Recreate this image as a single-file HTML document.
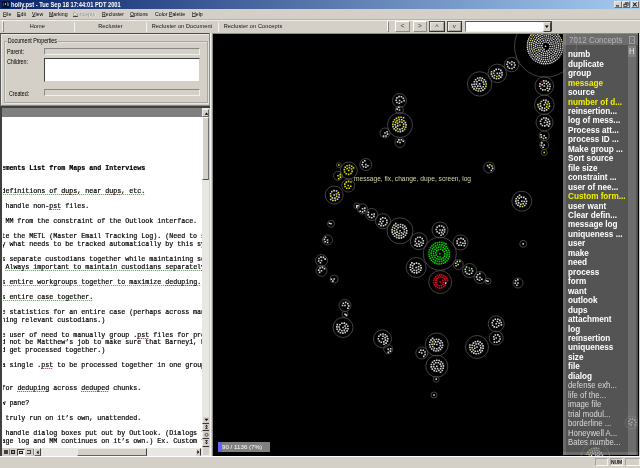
<!DOCTYPE html>
<html><head><meta charset="utf-8"><title>holly.pst</title>
<style>
html,body{margin:0;padding:0}
body{width:640px;height:468px;overflow:hidden;position:relative;background:#d4d0c8;font-family:"Liberation Sans",sans-serif;font-size:6px;color:#000;-webkit-text-size-adjust:none;will-change:transform}
div,span{position:absolute;box-sizing:border-box;white-space:pre}
#title{left:0;top:0;width:640px;height:9px;background:linear-gradient(to right,#0a246a 0%,#a6caf0 100%)}
#title .t{left:11px;top:0;height:9px;line-height:9px;color:#fff;font-weight:bold;font-size:7.2px;transform-origin:0 50%;transform:scaleX(0.795)}
.tb{top:1px;width:7.6px;height:6.6px;background:#d8d5ce;border:1px solid;border-color:#ebe9e4 #6c6a66 #6c6a66 #ebe9e4}
#menu{left:0;top:9px;width:640px;height:10px}
#menu span{top:0;height:10px;line-height:10px;font-size:6.2px;transform-origin:0 50%;transform:scaleX(0.842)}
#menu u{text-decoration:underline;text-decoration-thickness:0.45px;text-underline-offset:0.4px;text-decoration-color:#444}
#tools{left:0;top:20px;width:640px;height:13px}
#tools span.l{top:0;height:13px;line-height:13px;font-size:5.6px;letter-spacing:0.1px;text-align:center;color:#111}
.sep{top:2px;width:1.4px;height:10px;background:linear-gradient(90deg,#96948c 0 50%,#f4f2ee 50% 100%)}
.btn{background:#d4d0c8;border:1px solid;border-color:#efede9 #66645f #66645f #efede9;font-size:6px;text-align:center;line-height:9px;font-weight:bold;color:#222}
.sunk{border:1px solid;border-color:#8a8884 #f2f0ec #f2f0ec #8a8884;background:#d4d0c8}
.nb{font-weight:normal;font-size:7px;color:#3a3a3a;line-height:8.5px}
.vb{left:201.8px;width:7.6px;background:#d4d0c8;border-left:1px solid #efede9;border-bottom:1px solid #333}
#clip{left:1.1px;top:0;width:199px;height:331px;overflow:hidden}
#doc{left:1.9px;top:117px;width:200.1px;height:331px;background:#fff;overflow:hidden}
.ln{left:-1.6px;height:8px;line-height:8px;font-family:"Liberation Mono",monospace;font-size:6.667px;color:#000;letter-spacing:0px;-webkit-text-stroke:0.2px #000}
.ln b{font-weight:bold}
u{text-decoration:none}
u.g{background:repeating-linear-gradient(90deg,#30b030 0 1.2px,rgba(48,176,48,0.25) 1.2px 2px) 0 7.3px/100% 0.8px no-repeat;padding-bottom:1px}
u.r{background:repeating-linear-gradient(90deg,#e02020 0 1.2px,rgba(224,32,32,0.3) 1.2px 2px) 0 7.3px/100% 0.8px no-repeat;padding-bottom:1px}
#graph{left:213px;top:34px;width:426px;height:422px;background:#000;overflow:hidden}
#graph svg{position:absolute;left:0;top:0}
.o{fill:none;stroke:#4e4e4e;stroke-width:0.85}
.d{fill:none;stroke-linecap:square}
path.d:not([stroke-width]){stroke-width:1.6}
#panel{left:563.3px;top:34px;width:75.2px;height:421px;overflow:hidden}
.ci{left:4.7px;height:10px;line-height:10px;font-size:8.6px;color:#fff;font-weight:bold;transform-origin:0 50%;transform:scaleX(0.95)}
.ci.y{color:#f0f000}
.ci.n{font-weight:normal;color:#dadada;transform:scaleX(0.905)}
.sb{border-color:#a4a29c #f6f5f2 #f6f5f2 #a4a29c}
#status{left:0;top:456px;width:640px;height:12px;background:#d4d0c8}
</style></head><body>
<div id="title"><div style="left:1.5px;top:1px;width:8px;height:7px;background:#0c1030"></div><div style="left:2.5px;top:3px;width:1.5px;height:3px;background:#a02828"></div><div style="left:4.5px;top:2.5px;width:1.5px;height:2px;background:#c8b020"></div><div style="left:6.5px;top:3px;width:2px;height:3px;background:#208848"></div><div style="left:6.5px;top:1.5px;width:1.5px;height:1.5px;background:#c03030"></div>
<div class="t">holly.pst - Tue Sep 18 17:44:01 PDT 2001</div>
<div class="tb" style="left:614px"><svg width="6" height="5" style="position:absolute;left:0;top:0"><rect x="1" y="3.2" width="3" height="1.3" fill="#333"/></svg></div>
<div class="tb" style="left:622.2px"><svg width="6" height="5" style="position:absolute;left:0;top:0"><path d="M2.2 0.7h3v2.6h-1M2.2 1.1h3" stroke="#222" stroke-width="0.7" fill="none"/><path d="M0.8 2.1h3v2.4h-3zM0.8 2.5h3" stroke="#222" stroke-width="0.7" fill="#d8d5ce"/></svg></div>
<div class="tb" style="left:631.2px"><svg width="6" height="5" style="position:absolute;left:0;top:0"><path d="M0.9 0.5L4.7 4.3M4.7 0.5L0.9 4.3" stroke="#1a1a1a" stroke-width="1.05"/></svg></div>
</div>
<div id="menu">
<span style="left:3px"><u>F</u>ile</span><span style="left:17px"><u>E</u>dit</span><span style="left:32px"><u>V</u>iew</span><span style="left:49px"><u>M</u>arking</span><span style="left:73.5px;color:#fff"><u>C</u>oncepts</span><span style="left:73px;color:#808080"><u>C</u>oncepts</span><span style="left:101.5px"><u>R</u>ecluster</span><span style="left:130px"><u>O</u>ptions</span><span style="left:155px">Color <u>P</u>alette</span><span style="left:191.5px"><u>H</u>elp</span>
</div>
<div style="left:0;top:19px;width:640px;height:1px;background:#b8b4ac"></div>
<div style="left:0;top:19.5px;width:640px;height:0.6px;background:#f0eeea"></div>
<div id="tools">
<div style="left:1.5px;top:1px;width:1.5px;height:11px;border:0.5px solid;border-color:#f4f2ee #908e88 #908e88 #f4f2ee"></div>
<span class="l" style="left:2.3px;width:70px">Home</span><div class="sep" style="left:74px"></div>
<span class="l" style="left:75px;width:71px">Recluster</span><div class="sep" style="left:146px"></div>
<span class="l" style="left:147px;width:70px">Recluster on Document</span><div class="sep" style="left:217.5px"></div>
<span class="l" style="left:219px;width:68px">Recluster on Concepts</span>
<div style="left:387px;top:1px;width:1.5px;height:11px;border:0.5px solid;border-color:#fff #808080 #808080 #fff"></div>
<div class="btn nb" style="left:395px;top:1px;width:15px;height:10.5px;border-color:#fff #8a8a86 #8a8a86 #fff">&lt;</div>
<div class="btn nb" style="left:412.5px;top:1px;width:14.5px;height:10.5px;border-color:#fff #8a8a86 #8a8a86 #fff">&gt;</div>
<div class="btn nb" style="left:429px;top:0.5px;width:16px;height:11.5px;border-color:#505050 #303030 #303030 #505050;box-shadow:inset 0.6px 0.6px 0 #fff,inset -0.6px -0.6px 0 #808080;line-height:9px">^</div>
<div class="btn nb" style="left:446.5px;top:0.5px;width:15.5px;height:11.5px;border-color:#505050 #303030 #303030 #505050;box-shadow:inset 0.6px 0.6px 0 #fff,inset -0.6px -0.6px 0 #808080;font-size:6px;line-height:9.5px">v</div>
<div style="left:465px;top:1px;width:87px;height:10.5px;background:#fff;border:1px solid;border-color:#505050 #404040 #f2f0ec #707070"><div style="right:0;top:0;width:7.6px;height:9.5px;background:#d4d0c8;border:1px solid;border-color:#e4e2dc #404040 #404040 #efede9"><svg width="6" height="8" style="position:absolute;left:0;top:0"><path d="M0.9 2.6L4.7 2.6L2.8 4.9Z" fill="#000"/></svg></div></div>
</div>

<!-- left side -->
<div style="left:0;top:33px;width:213px;height:423px;background:#d4d0c8"></div>
<div style="left:0px;top:33px;width:210px;height:73px;border:1px solid;border-color:#484848 #8a8884 #8a8884 #585858;box-shadow:inset 1px 1px 0 #eceae6"></div>
<div style="left:4px;top:40.5px;width:204px;height:62.5px;border:1px solid #a8a6a0;box-shadow:0.6px 0.6px 0 #f4f3f0, inset 0.6px 0.6px 0 #f4f3f0"></div>
<div style="left:7px;top:36px;height:9px;line-height:9px;padding:0 1px;background:#d4d0c8;font-size:6.7px;letter-spacing:-0.1px;transform-origin:0 50%;transform:scaleX(0.806)">Document Properties</div>
<div style="left:7px;top:47px;height:9px;line-height:9px;font-size:6.7px;letter-spacing:-0.1px;transform-origin:0 50%;transform:scaleX(0.806)">Parent:</div>
<div style="left:7px;top:56.5px;height:9px;line-height:9px;font-size:6.7px;letter-spacing:-0.1px;transform-origin:0 50%;transform:scaleX(0.806)">Children:</div>
<div style="left:8.5px;top:88.5px;height:9px;line-height:9px;font-size:6.7px;letter-spacing:-0.1px;transform-origin:0 50%;transform:scaleX(0.806)">Created:</div>
<div class="sunk" style="left:44px;top:48px;width:155.5px;height:6.5px"></div>
<div class="sunk" style="left:44px;top:57.5px;width:155.5px;height:24.5px;background:#fff;border-color:#404040 #d4d0c8 #d4d0c8 #404040"></div>
<div class="sunk" style="left:44px;top:89px;width:155.5px;height:6.5px"></div>

<div style="left:0;top:106px;width:1.9px;height:350px;background:#404040"></div>
<div style="left:0;top:106px;width:210px;height:2px;background:#404040"></div>
<div style="left:1.9px;top:108px;width:200.1px;height:9px;background:#808080"></div>
<div id="doc"><div id="clip">
<div class="ln" style="top:47.30px"><b>ements List from Maps and Interviews</b></div>
<div class="ln" style="top:70.00px"><u class="g">definitions of <u class="r">dups</u>, near <u class="r">dups</u>, etc.</u></div>
<div class="ln" style="top:85.12px"> handle non-<u class="r">pst</u> files.</div>
<div class="ln" style="top:100.26px"> MM from the constraint of the Outlook interface.</div>
<div class="ln" style="top:115.39px">te the METL (Master Email Tracking Log). (Need to s</div>
<div class="ln" style="top:122.95px">y what needs to be tracked automatically by this sy</div>
<div class="ln" style="top:138.08px">s separate custodians together while maintaining se</div>
<div class="ln" style="top:145.64px"> <u class="g">Always important to maintain custodians separately</u></div>
<div class="ln" style="top:160.78px"><u class="g">s entire workgroups together to maximize <u class="r">deduping</u>.</u></div>
<div class="ln" style="top:175.91px"><u class="g">s entire case together.</u></div>
<div class="ln" style="top:191.04px">e statistics for an entire case (perhaps across man</div>
<div class="ln" style="top:198.60px">ning relevant custodians.)</div>
<div class="ln" style="top:213.73px">e user of need to manually group .<u class="r">pst</u> files for pro</div>
<div class="ln" style="top:221.30px">d not be Matthew’s job to make sure that Barney1, Ba</div>
<div class="ln" style="top:228.86px">d get processed together.)</div>
<div class="ln" style="top:243.99px">a single .<u class="r">pst</u> to be processed together in one group</div>
<div class="ln" style="top:266.69px">for <u class="r">deduping</u> across <u class="r">deduped</u> chunks.</div>
<div class="ln" style="top:281.82px">w pane?</div>
<div class="ln" style="top:296.95px"> truly run on it’s own, unattended.</div>
<div class="ln" style="top:312.08px"> handle dialog boxes put out by Outlook. (Dialogs t</div>
<div class="ln" style="top:319.64px">age log and MM continues on it’s own.) Ex. Custom f</div>
</div></div>
<!-- v scrollbar -->
<div style="left:201.8px;top:108px;width:7.6px;height:340px;background:#e9e7e3"></div>
<div class="btn" style="left:201.8px;top:108.5px;width:7.6px;height:8.5px"><svg width="7" height="8" style="position:absolute;left:0;top:0"><path d="M1.7 4.8L5.3 4.8L3.5 2.6Z" fill="#000"/></svg></div>
<div class="btn" style="left:201.8px;top:117px;width:7.6px;height:62.5px;border-width:0.5px;border-color:#fff #707070 #505050 #fff;border-bottom-width:0.8px"></div>
<div class="vb" style="top:416.8px;height:7px"><svg width="7" height="6" style="position:absolute;left:0;top:0"><path d="M1.6 1.8L5.4 1.8L3.5 4Z" fill="#000"/></svg></div>
<div class="vb" style="top:423.8px;height:6.8px"><svg width="7" height="6" style="position:absolute;left:0;top:0"><path d="M2 2.6L5 2.6L3.5 0.8ZM2 4.8L5 4.8L3.5 3Z" fill="#000"/></svg></div>
<div class="vb" style="top:430.6px;height:8.6px"><svg width="7" height="8" style="position:absolute;left:0;top:0"><circle cx="3.6" cy="3.8" r="1.5" fill="none" stroke="#222" stroke-width="0.7"/></svg></div>
<div class="vb" style="top:439.2px;height:7.8px"><svg width="7" height="7" style="position:absolute;left:0;top:0"><path d="M2 1.2L5 1.2L3.5 3ZM2 3.4L5 3.4L3.5 5.2Z" fill="#000"/></svg></div>
<!-- h scrollbar -->
<div style="left:1.9px;top:448px;width:208px;height:7.5px;background:#e9e7e3"></div>
<div style="left:1.9px;top:448px;width:32px;height:7.5px;background:#d4d0c8"></div>
<div style="left:4px;top:450px;width:3.5px;height:4px;background:#404040"></div>
<div style="left:8.5px;top:449px;width:0.5px;height:6px;background:#808080"></div>
<div style="left:10.5px;top:450px;width:4.5px;height:4px;border:0.5px solid #202020;background:#a0a0a0"></div>
<div style="left:17px;top:448.5px;width:7.5px;height:7px;border:1px solid #404040;border-right-color:#fff;border-bottom-color:#fff;background:#e9e7e3"><div style="left:1px;top:1px;width:3.5px;height:3px;border:0.5px solid #202020"></div></div>
<div style="left:26.5px;top:450px;width:4px;height:4px;border:0.5px solid #404040;border-left:none"></div>
<div style="left:32.5px;top:449px;width:0.5px;height:6px;background:#808080"></div>
<div class="btn" style="left:34px;top:448px;width:7px;height:7.5px;border-width:0.5px;border-right:1px solid #404040"><svg width="7" height="7" style="position:absolute;left:0;top:0"><path d="M3.6 1.6L3.6 5.2L1.6 3.4Z" fill="#000"/></svg></div>
<div class="btn" style="left:77px;top:448px;width:69.5px;height:7.5px;border-width:0.5px;border-right:1px solid #404040"></div>
<div class="btn" style="left:195.3px;top:448px;width:6.2px;height:7.5px;border-color:#efede9 #333 #d4d0c8 #efede9"><svg width="7" height="7" style="position:absolute;left:0;top:0"><path d="M1.3 1.3L1.3 4.9L3.3 3.1Z" fill="#000"/></svg></div>
<div style="left:201.8px;top:447.4px;width:7.6px;height:7.6px;background:#d4d0c8;border-left:1px solid #efede9"></div>
<div style="left:210.2px;top:33px;width:0.8px;height:423px;background:#fff;opacity:.75"></div>

<!-- graph -->
<div style="left:212px;top:33px;width:428px;height:423px;background:#8e8c88"></div><div style="left:213px;top:34px;width:427px;height:421.6px;background:#000"></div>
<div id="graph">
<svg width="426" height="422" viewBox="0 0 426 422">
<circle cx="332.5" cy="12.2" r="31.0" class="o"/>
<path d="M332.5 12.2h.01M331.0 15.2h.01M329.4 13.8h.01M328.8 11.7h.01M329.5 9.7h.01M331.1 8.4h.01M333.2 8.0h.01M335.2 8.8h.01M336.7 10.3h.01M337.2 12.4h.01M336.8 14.5h.01M335.5 16.2h.01M333.7 17.2h.01M331.6 17.4h.01M329.6 16.7h.01M328.0 15.4h.01M327.0 13.5h.01M326.8 11.4h.01M327.3 9.3h.01M328.6 7.6h.01M330.3 6.5h.01M332.4 6.0h.01M334.5 6.2h.01M336.4 7.0h.01M337.9 8.5h.01M338.9 10.4h.01M339.3 12.4h.01M339.0 14.5h.01M338.1 16.4h.01M336.6 18.0h.01M334.8 19.0h.01M332.7 19.5h.01M330.6 19.3h.01M328.6 18.6h.01M327.0 17.3h.01M325.7 15.7h.01M324.9 13.7h.01M324.7 11.6h.01M325.0 9.5h.01M325.9 7.6h.01M327.3 6.0h.01M329.0 4.8h.01M331.0 4.1h.01M333.1 3.9h.01M335.2 4.2h.01M337.1 5.0h.01M338.8 6.3h.01M340.1 8.0h.01M340.9 9.9h.01M341.3 12.0h.01M341.2 14.1h.01M340.6 16.1h.01M339.5 17.9h.01M338.1 19.4h.01M336.3 20.6h.01M334.3 21.3h.01M332.3 21.6h.01M330.2 21.3h.01M328.2 20.7h.01M326.4 19.6h.01M324.9 18.1h.01M322.9 14.4h.01M322.6 12.3h.01M322.8 10.2h.01M323.3 8.2h.01M324.3 6.3h.01M325.7 4.7h.01M327.3 3.4h.01M329.2 2.5h.01M331.2 1.9h.01M333.3 1.8h.01M335.4 2.1h.01M337.4 2.9h.01M339.2 4.0h.01M340.7 5.4h.01M342.0 7.1h.01M342.8 9.0h.01M343.3 11.1h.01M343.4 13.2h.01M343.1 15.2h.01M342.4 17.2h.01M341.3 19.0h.01M339.9 20.6h.01M338.2 21.9h.01M336.4 22.8h.01M334.3 23.4h.01M332.2 23.6h.01M330.1 23.5h.01M328.1 22.9h.01M326.2 22.0h.01M324.5 20.7h.01M323.1 19.2h.01M321.9 17.4h.01M321.1 15.5h.01M320.7 13.5h.01M320.6 11.4h.01M320.8 9.3h.01M321.5 7.3h.01M322.4 5.4h.01M323.7 3.7h.01M325.3 2.3h.01M327.0 1.2h.01M329.0 0.3h.01M331.0 -0.1h.01M333.1 -0.3h.01M335.2 -0.0h.01M337.2 0.5h.01M339.1 1.4h.01M340.9 2.6h.01M342.4 4.1h.01M343.6 5.8h.01M344.5 7.7h.01M345.2 9.7h.01M345.5 11.8h.01M345.4 13.9h.01M345.0 16.0h.01M344.3 17.9h.01M343.3 19.8h.01M342.0 21.4h.01M340.4 22.8h.01M338.7 24.0h.01M336.8 24.9h.01M334.8 25.5h.01M332.7 25.7h.01M330.6 25.6h.01M328.5 25.2h.01M326.5 24.5h.01M324.7 23.5h.01M323.0 22.2h.01M321.6 20.6h.01M320.4 18.9h.01M319.5 17.0h.01M318.8 15.0h.01M318.5 12.9h.01M318.5 10.8h.01M318.8 8.8h.01M319.4 6.7h.01M321.5 3.1h.01M323.0 1.6h.01M324.6 0.2h.01M326.4 -0.8h.01M328.3 -1.6h.01M330.4 -2.1h.01M332.5 -2.3h.01M334.6 -2.2h.01M336.6 -1.8h.01M338.6 -1.1h.01M340.5 -0.2h.01M342.2 1.1h.01M343.7 2.5h.01M345.0 4.2h.01M346.1 6.0h.01M346.8 7.9h.01M347.3 10.0h.01M347.5 12.1h.01M347.5 14.2h.01M347.1 16.2h.01M346.4 18.2h.01M345.5 20.1h.01M344.3 21.9h.01M342.9 23.4h.01M341.3 24.8h.01M339.5 25.9h.01M337.6 26.8h.01M335.6 27.4h.01M333.5 27.7h.01M331.4 27.8h.01M329.3 27.5h.01M327.3 27.0h.01M325.4 26.2h.01M323.5 25.2h.01M321.9 23.9h.01M320.4 22.4h.01M319.1 20.7h.01M318.0 18.9h.01M317.2 17.0h.01M316.7 14.9h.01M316.4 12.9h.01M316.5 10.8h.01M316.7 8.7h.01M318.1 4.7h.01M321.9 -0.3h.01M323.6 -1.6h.01M325.4 -2.6h.01M327.3 -3.5h.01M329.3 -4.0h.01M331.4 -4.3h.01M333.5 -4.4h.01M335.6 -4.2h.01M337.6 -3.7h.01M339.6 -3.0h.01M341.5 -2.0h.01M343.2 -0.8h.01M344.8 0.6h.01M346.1 2.2h.01M348.3 5.8h.01M349.4 9.9h.01M349.6 11.9h.01M349.6 14.1h.01M349.2 16.1h.01M348.7 18.2h.01M347.9 20.1h.01M346.8 21.9h.01M345.6 23.6h.01M344.1 25.1h.01M342.5 26.5h.01M340.7 27.6h.01M338.9 28.5h.01M336.9 29.2h.01M334.8 29.6h.01M332.7 29.8h.01M330.6 29.8h.01M328.5 29.5h.01M326.5 28.9h.01M324.6 28.1h.01M322.7 27.1h.01M321.0 25.9h.01M319.5 24.5h.01M318.1 22.9h.01M316.9 21.1h.01M315.9 19.3h.01M315.2 17.3h.01M314.7 15.3h.01M314.4 13.2h.01M314.4 11.1h.01M314.6 9.0h.01M315.0 7.0h.01M315.7 5.0h.01M316.6 3.1h.01M317.7 1.3h.01M319.0 -0.3h.01M320.5 -1.8h.01M322.2 -3.1h.01M324.0 -4.2h.01M325.9 -5.1h.01M327.9 -5.8h.01M329.9 -6.2h.01M332.0 -6.5h.01M334.1 -6.4h.01M336.2 -6.2h.01M338.2 -5.7h.01M340.2 -5.0h.01M342.1 -4.0h.01M343.9 -2.9h.01" stroke="#d4d4d4" stroke-width="1.4" class="d"/>
<path d="M323.7 16.4h.01M320.4 4.9h.01M317.3 6.6h.01M319.1 2.9h.01M320.4 1.2h.01M347.3 3.9h.01M349.0 7.8h.01" stroke="#d8d800" stroke-width="1.4" class="d"/>
<circle cx="298.6" cy="30.6" r="7.2" class="o"/>
<path d="M298.6 30.6h.01M296.7 29.0h.01M298.9 27.8h.01M301.2 28.7h.01M302.0 31.0h.01M301.1 33.3h.01M299.0 34.5h.01M296.5 34.2h.01M294.7 32.6h.01M294.0 30.3h.01M294.7 27.9h.01" stroke="#d4d4d4" class="d"/>
<circle cx="284.3" cy="39.4" r="9.3" class="o"/>
<path d="M284.3 39.4h.01M286.8 39.2h.01M286.1 41.6h.01M281.6 41.5h.01M281.3 36.9h.01M283.2 35.4h.01M285.7 35.3h.01M287.8 36.4h.01M289.0 38.6h.01M289.0 41.0h.01M287.8 43.1h.01M285.8 44.5h.01M283.4 44.8h.01M281.1 44.0h.01M279.4 42.4h.01M278.4 40.1h.01M278.5 37.7h.01" stroke="#d4d4d4" class="d"/>
<path d="M283.8 42.5h.01M280.6 39.2h.01" stroke="#d8d800" class="d"/>
<circle cx="266.6" cy="49.9" r="12.2" class="o"/>
<path d="M266.6 49.9h.01M267.3 52.3h.01M264.8 52.1h.01M263.4 50.1h.01M264.0 47.7h.01M266.0 46.3h.01M268.4 46.4h.01M270.3 48.0h.01M270.9 50.3h.01M270.2 52.7h.01M268.4 54.3h.01M266.1 54.8h.01M263.7 54.2h.01M262.0 52.5h.01M261.1 50.2h.01M261.4 47.8h.01M262.6 45.7h.01M264.6 44.3h.01M267.0 43.8h.01M269.3 44.3h.01M271.3 45.7h.01M272.7 47.6h.01M271.7 54.5h.01M269.9 56.1h.01M267.7 57.0h.01M265.3 57.0h.01M261.0 54.9h.01M259.6 52.9h.01M258.9 50.6h.01" stroke="#d4d4d4" class="d"/>
<path d="M273.2 50.0h.01M272.9 52.4h.01M263.0 56.3h.01" stroke="#d8d800" class="d"/>
<circle cx="331.3" cy="52.0" r="9.3" class="o"/>
<path d="M331.3 52.0h.01M329.2 50.7h.01M331.2 49.2h.01M333.6 49.8h.01M334.7 52.0h.01M334.2 54.3h.01M329.8 55.9h.01M327.7 54.5h.01M326.7 52.3h.01M327.0 49.9h.01M330.7 46.9h.01M333.1 47.0h.01M335.2 48.2h.01M336.6 50.2h.01M337.1 52.5h.01M336.5 54.9h.01M335.0 56.8h.01" stroke="#d4d4d4" class="d"/>
<path d="M332.2 55.8h.01" stroke="#d8d800" class="d"/>
<path d="M328.5 47.9h.01" stroke="#e00020" class="d"/>
<circle cx="331.3" cy="70.8" r="9.8" class="o"/>
<path d="M331.3 70.8h.01M332.4 68.6h.01M331.7 74.2h.01M329.2 73.9h.01M327.6 72.1h.01M327.3 69.6h.01M330.6 66.3h.01M333.0 66.4h.01M336.4 72.1h.01M333.6 75.9h.01M331.3 76.6h.01M328.9 76.2h.01M326.8 74.9h.01M324.9 70.6h.01" stroke="#d4d4d4" class="d"/>
<path d="M334.1 70.4h.01M333.7 72.9h.01M328.5 67.5h.01M335.1 67.6h.01M336.3 69.7h.01M335.5 74.3h.01M325.5 73.0h.01" stroke="#d8d800" class="d"/>
<circle cx="331.5" cy="88.5" r="8.5" class="o"/>
<path d="M331.5 88.5h.01M332.7 86.3h.01M334.3 88.1h.01M333.9 90.6h.01M331.8 91.9h.01M329.4 91.5h.01M327.8 89.7h.01M327.5 87.3h.01M328.7 85.2h.01M330.8 84.0h.01M333.2 84.1h.01M335.3 85.3h.01M336.5 87.4h.01M336.6 89.9h.01M335.6 92.1h.01" stroke="#d4d4d4" class="d"/>
<circle cx="331.2" cy="101.8" r="5.0" class="o"/>
<path d="M331.2 101.8h.01M332.8 103.7h.01M328.4 103.1h.01M328.0 100.7h.01" stroke="#d4d4d4" class="d"/>
<path d="M330.5 104.5h.01" stroke="#d8d800" class="d"/>
<circle cx="331.2" cy="111.0" r="4.5" class="o"/>
<path d="M331.2 111.0h.01M330.1 113.2h.01M328.4 111.4h.01M328.8 108.9h.01" stroke="#d4d4d4" class="d"/>
<circle cx="331.2" cy="118.5" r="3.0" class="o"/>
<path d="M331.2 118.5h.01" stroke="#d8d800" class="d"/>
<circle cx="186.5" cy="66.5" r="7.0" class="o"/>
<path d="M186.5 66.5h.01M188.5 68.0h.01M186.3 69.3h.01M184.0 68.5h.01M183.1 66.2h.01M183.9 63.9h.01M186.0 62.6h.01M188.4 62.8h.01M190.3 64.3h.01M191.1 66.6h.01" stroke="#d4d4d4" class="d"/>
<circle cx="186.5" cy="76.0" r="4.0" class="o"/>
<path d="M186.5 76.0h.01M184.2 75.1h.01M185.9 73.2h.01" stroke="#d4d4d4" class="d"/>
<circle cx="187.0" cy="91.0" r="12.5" class="o"/>
<path d="M187.0 91.0h.01M186.6 87.9h.01M190.6 90.1h.01M184.5 94.8h.01M182.6 88.4h.01M184.1 86.6h.01M186.3 85.6h.01M190.9 86.7h.01M192.8 93.3h.01M191.6 95.4h.01M185.0 97.5h.01M179.8 90.2h.01M180.3 87.8h.01M181.6 85.8h.01M185.7 83.4h.01M188.1 83.2h.01" stroke="#d8d800" class="d"/>
<path d="M184.7 91.9h.01M184.6 89.4h.01M189.0 88.2h.01M190.6 92.6h.01M189.2 94.5h.01M186.9 95.4h.01M182.8 93.1h.01M182.1 90.8h.01M188.7 85.7h.01M192.4 88.6h.01M193.1 90.9h.01M189.7 96.9h.01M187.4 97.6h.01M182.8 96.4h.01M181.1 94.7h.01M180.0 92.6h.01M183.5 84.2h.01M190.5 83.8h.01" stroke="#d4d4d4" class="d"/>
<circle cx="172.0" cy="99.0" r="5.0" class="o"/>
<path d="M172.0 99.0h.01M174.1 97.7h.01M174.6 100.1h.01M173.0 102.0h.01M170.6 102.1h.01" stroke="#d4d4d4" class="d"/>
<circle cx="187.0" cy="108.5" r="5.0" class="o"/>
<path d="M187.0 108.5h.01M184.6 107.9h.01M185.9 105.9h.01M188.4 105.7h.01M190.2 107.3h.01" stroke="#d4d4d4" class="d"/>
<circle cx="152.8" cy="130.5" r="6.0" class="o"/>
<path d="M152.8 130.5h.01M154.9 131.8h.01M152.9 133.3h.01M150.5 132.7h.01M149.3 130.6h.01M149.9 128.2h.01M151.8 126.7h.01" stroke="#d4d4d4" class="d"/>
<circle cx="125.8" cy="131.0" r="2.5" class="o"/>
<path d="M125.8 131.0h.01" stroke="#d8d800" class="d"/>
<circle cx="135.8" cy="136.5" r="8.5" class="o"/>
<path d="M135.8 136.5h.01M134.1 134.6h.01M136.4 133.7h.01M138.5 135.0h.01M139.1 137.4h.01M137.9 139.5h.01M135.6 140.4h.01M133.2 139.8h.01M131.6 138.0h.01M131.3 135.6h.01M132.2 133.3h.01M134.1 131.8h.01M136.5 131.4h.01M138.8 132.2h.01M140.5 133.9h.01" stroke="#d8d800" class="d"/>
<circle cx="125.0" cy="141.8" r="4.5" class="o"/>
<path d="M125.0 141.8h.01M127.2 140.6h.01M127.5 143.1h.01M125.7 144.8h.01" stroke="#d8d800" class="d"/>
<circle cx="135.2" cy="151.5" r="6.5" class="o"/>
<path d="M135.2 151.5h.01M137.7 152.2h.01M136.2 154.2h.01M133.7 154.3h.01M132.0 152.5h.01M131.8 150.1h.01M133.3 148.1h.01M135.6 147.4h.01M137.9 148.0h.01" stroke="#d8d800" class="d"/>
<circle cx="121.2" cy="161.0" r="9.0" class="o"/>
<path d="M121.2 161.0h.01M123.5 160.0h.01M121.9 164.1h.01M119.4 163.9h.01M117.5 159.7h.01M121.1 156.6h.01M123.5 157.0h.01M126.2 160.8h.01M125.9 163.2h.01M124.5 165.2h.01M119.9 166.5h.01M117.7 165.5h.01" stroke="#d4d4d4" class="d"/>
<path d="M123.7 162.4h.01M117.7 162.1h.01M118.8 157.6h.01M125.3 158.6h.01M122.3 166.4h.01" stroke="#d8d800" class="d"/>
<circle cx="276.2" cy="133.5" r="5.5" class="o"/>
<path d="M276.2 133.5h.01M274.6 131.6h.01M279.0 132.0h.01M279.6 134.4h.01M278.3 136.5h.01" stroke="#d4d4d4" class="d"/>
<path d="M276.9 130.7h.01" stroke="#d8d800" class="d"/>
<circle cx="308.8" cy="167.2" r="10.0" class="o"/>
<path d="M308.8 167.2h.01M311.2 167.5h.01M310.2 169.7h.01M307.8 170.2h.01M305.7 168.9h.01M305.1 166.5h.01M306.2 164.3h.01M308.3 163.1h.01M310.7 163.4h.01M312.7 164.9h.01M313.5 167.2h.01M313.1 169.5h.01M311.7 171.5h.01M307.0 172.4h.01M304.9 171.3h.01M303.4 169.4h.01M302.8 167.1h.01M303.2 164.7h.01M304.6 162.7h.01M306.5 161.3h.01" stroke="#d4d4d4" class="d"/>
<path d="M309.5 172.5h.01" stroke="#d8d800" class="d"/>
<circle cx="143.8" cy="171.8" r="3.0" class="o"/>
<path d="M143.8 171.8h.01M145.3 171.8h.01M143.8 173.3h.01" stroke="#d4d4d4" class="d"/>
<circle cx="149.5" cy="174.8" r="5.0" class="o"/>
<path d="M149.5 174.8h.01M151.9 174.1h.01M151.6 176.6h.01M149.5 177.9h.01M147.2 177.3h.01" stroke="#d4d4d4" class="d"/>
<circle cx="158.8" cy="180.5" r="6.0" class="o"/>
<path d="M158.8 180.5h.01M161.2 180.0h.01M160.9 182.4h.01M158.7 183.7h.01M156.4 183.0h.01M155.1 180.9h.01M155.4 178.4h.01" stroke="#d4d4d4" class="d"/>
<circle cx="170.0" cy="187.2" r="7.5" class="o"/>
<path d="M170.0 187.2h.01M168.7 189.4h.01M167.2 187.5h.01M167.7 185.1h.01M169.8 183.8h.01M172.2 184.3h.01M173.8 186.2h.01M173.9 188.6h.01M172.6 190.7h.01M170.5 191.8h.01M168.0 191.6h.01M166.0 190.2h.01" stroke="#d4d4d4" class="d"/>
<circle cx="187.0" cy="196.8" r="13.0" class="o"/>
<path d="M187.0 196.8h.01M188.5 198.7h.01M186.2 199.5h.01M184.1 198.1h.01M185.1 193.6h.01M187.4 192.8h.01M189.7 193.6h.01M191.2 195.5h.01M191.4 198.0h.01M190.3 200.1h.01M188.3 201.5h.01M185.9 201.8h.01M183.7 200.9h.01M182.1 199.1h.01M181.4 196.7h.01M181.7 194.3h.01M183.1 192.3h.01M185.1 191.0h.01M187.5 190.5h.01M189.8 191.0h.01M191.8 192.4h.01M193.2 194.4h.01M193.8 196.7h.01M193.5 199.1h.01M192.4 201.3h.01M190.6 202.9h.01M188.4 203.9h.01M186.0 204.1h.01M183.7 203.5h.01M181.6 202.2h.01M180.1 200.3h.01M179.2 198.1h.01M179.1 195.6h.01M180.9 191.2h.01M182.7 189.6h.01" stroke="#d4d4d4" class="d"/>
<path d="M183.7 195.7h.01M179.7 193.3h.01" stroke="#d8d800" class="d"/>
<circle cx="205.8" cy="207.2" r="8.5" class="o"/>
<path d="M205.8 207.2h.01M207.9 208.5h.01M206.0 210.1h.01M203.6 209.5h.01M202.3 207.4h.01M202.8 205.0h.01M204.7 203.5h.01M207.1 203.3h.01M209.2 204.6h.01M210.3 206.8h.01M210.1 209.2h.01M208.7 211.2h.01M206.6 212.3h.01M204.1 212.3h.01M202.0 211.2h.01" stroke="#d4d4d4" class="d"/>
<circle cx="227.0" cy="196.0" r="8.0" class="o"/>
<path d="M227.0 196.0h.01M229.5 196.1h.01M228.6 198.4h.01M226.2 199.1h.01M224.1 197.8h.01M223.3 195.5h.01M224.2 193.2h.01M226.3 191.9h.01M228.7 192.0h.01M230.7 193.4h.01M231.7 195.6h.01M231.5 198.0h.01M230.2 200.0h.01M228.1 201.2h.01" stroke="#d4d4d4" class="d"/>
<circle cx="226.8" cy="219.8" r="16.5" class="o"/>
<path d="M226.8 219.8h.01M227.1 223.0h.01M224.8 222.7h.01M223.2 221.1h.01M222.8 218.9h.01M223.7 216.9h.01M225.5 215.6h.01M227.7 215.3h.01M229.8 216.1h.01M231.2 217.8h.01M231.8 219.9h.01M231.4 222.1h.01M230.1 223.9h.01M228.2 225.1h.01M226.0 225.4h.01M223.9 224.8h.01M222.1 223.5h.01M220.9 221.6h.01M220.5 219.4h.01M220.9 217.3h.01M222.0 215.3h.01M223.7 213.9h.01M225.7 213.1h.01M228.0 213.0h.01M230.1 213.6h.01M231.9 214.9h.01M233.2 216.6h.01M234.0 218.7h.01M234.1 220.9h.01M233.5 223.1h.01M232.3 225.0h.01M230.7 226.4h.01M228.7 227.4h.01M226.5 227.7h.01M224.3 227.4h.01M222.3 226.6h.01M220.5 225.2h.01M219.2 223.4h.01M218.5 221.3h.01M218.2 219.1h.01M218.6 217.0h.01M219.5 214.9h.01M220.8 213.2h.01M222.6 211.9h.01M224.6 211.0h.01M226.8 210.7h.01M229.0 210.9h.01M231.1 211.6h.01M233.0 212.8h.01M234.5 214.3h.01M235.6 216.3h.01M236.3 218.4h.01M236.4 220.6h.01M236.1 222.7h.01M235.2 224.8h.01M234.0 226.6h.01M232.3 228.1h.01M230.4 229.2h.01M228.3 229.8h.01M226.1 230.0h.01M223.9 229.7h.01M221.8 228.9h.01M220.0 227.8h.01M218.4 226.2h.01M217.2 224.4h.01M216.3 222.3h.01M216.0 220.2h.01M216.0 218.0h.01M216.5 215.8h.01M217.5 213.8h.01M218.8 212.0h.01M220.4 210.6h.01M222.3 209.4h.01M224.4 208.7h.01M226.6 208.4h.01M228.8 208.5h.01M230.9 209.0h.01M232.9 209.9h.01" stroke="#00c800" class="d"/>
<circle cx="203.2" cy="233.5" r="10.0" class="o"/>
<path d="M203.2 233.5h.01M205.6 232.7h.01M205.5 235.2h.01M203.5 236.6h.01M201.1 236.2h.01M199.6 234.2h.01M199.7 231.8h.01M201.2 229.9h.01M203.5 229.1h.01M205.9 229.8h.01M207.6 231.5h.01M208.2 233.9h.01M207.6 236.2h.01M206.0 238.0h.01M203.7 238.9h.01M201.3 238.8h.01M199.2 237.6h.01M197.7 235.7h.01M197.2 233.3h.01M197.6 230.9h.01M198.9 228.9h.01" stroke="#d4d4d4" class="d"/>
<circle cx="227.2" cy="248.0" r="11.5" class="o"/>
<path d="M227.2 248.0h.01M229.8 246.2h.01M230.6 248.2h.01M229.9 250.3h.01M228.2 251.7h.01M226.0 251.8h.01M224.1 250.7h.01M223.0 248.9h.01M222.9 246.7h.01M223.9 244.7h.01M225.6 243.4h.01M227.8 243.0h.01M229.9 243.6h.01M231.6 244.9h.01M232.6 246.8h.01M232.1 251.1h.01M230.7 252.7h.01M228.8 253.8h.01M226.7 254.1h.01M224.5 253.6h.01M222.7 252.4h.01M221.4 250.7h.01M220.7 248.7h.01M220.7 246.5h.01M221.4 244.5h.01M222.7 242.8h.01M224.5 241.5h.01M226.6 240.9h.01M228.7 240.9h.01M230.8 241.6h.01M232.6 242.8h.01M233.9 244.5h.01M234.7 246.5h.01" stroke="#e00020" class="d"/>
<path d="M232.7 249.0h.01" stroke="#d4d4d4" class="d"/>
<circle cx="247.5" cy="208.5" r="7.5" class="o"/>
<path d="M247.5 208.5h.01M249.9 209.3h.01M248.3 211.2h.01M245.9 211.2h.01M244.2 209.4h.01M244.1 207.0h.01M245.6 205.0h.01M248.0 204.4h.01M250.3 205.1h.01M251.8 207.0h.01M252.2 209.4h.01M251.3 211.7h.01" stroke="#d4d4d4" class="d"/>
<circle cx="245.2" cy="230.5" r="5.0" class="o"/>
<path d="M245.2 230.5h.01M242.7 229.3h.01M244.3 227.5h.01" stroke="#d4d4d4" class="d"/>
<path d="M243.1 231.8h.01M246.8 227.4h.01" stroke="#d8d800" class="d"/>
<circle cx="256.5" cy="236.5" r="7.0" class="o"/>
<path d="M256.5 236.5h.01M258.7 234.7h.01M259.6 237.0h.01M258.6 239.2h.01M256.3 240.2h.01M254.0 239.5h.01M252.5 237.6h.01M252.3 235.2h.01M253.5 233.0h.01" stroke="#d4d4d4" class="d"/>
<path d="M256.3 234.0h.01" stroke="#00c800" class="d"/>
<circle cx="267.0" cy="243.5" r="6.0" class="o"/>
<path d="M267.0 243.5h.01M268.8 245.2h.01M266.6 246.3h.01M264.4 245.3h.01M263.6 242.9h.01M264.6 240.7h.01M266.8 239.6h.01" stroke="#d4d4d4" class="d"/>
<circle cx="275.0" cy="247.2" r="3.0" class="o"/>
<path d="M275.0 247.2h.01M273.5 246.8h.01" stroke="#d4d4d4" class="d"/>
<circle cx="310.2" cy="209.8" r="3.5" class="o"/>
<path d="M310.2 209.8h.01" stroke="#d4d4d4" class="d"/>
<circle cx="305.0" cy="249.0" r="5.0" class="o"/>
<path d="M305.0 249.0h.01M303.8 251.2h.01M302.2 249.3h.01M302.7 246.8h.01M304.8 245.6h.01" stroke="#d4d4d4" class="d"/>
<circle cx="118.0" cy="189.8" r="3.5" class="o"/>
<path d="M118.0 189.8h.01M116.5 189.3h.01" stroke="#d4d4d4" class="d"/>
<circle cx="114.5" cy="206.0" r="5.0" class="o"/>
<path d="M114.5 206.0h.01M114.6 208.5h.01M112.2 207.7h.01M111.4 205.4h.01M112.5 203.2h.01" stroke="#d4d4d4" class="d"/>
<circle cx="108.5" cy="226.5" r="6.0" class="o"/>
<path d="M108.5 226.5h.01M107.4 228.8h.01M105.7 227.0h.01M106.0 224.5h.01M108.0 223.1h.01M110.4 223.4h.01M112.2 225.1h.01" stroke="#d4d4d4" class="d"/>
<circle cx="108.5" cy="236.8" r="5.5" class="o"/>
<path d="M108.5 236.8h.01M106.6 238.4h.01M105.7 236.1h.01M107.0 234.0h.01M109.4 233.4h.01M111.5 234.6h.01" stroke="#d4d4d4" class="d"/>
<circle cx="121.2" cy="245.0" r="4.0" class="o"/>
<path d="M121.2 245.0h.01M119.9 247.1h.01M118.4 245.2h.01" stroke="#d4d4d4" class="d"/>
<circle cx="132.0" cy="271.5" r="6.0" class="o"/>
<path d="M132.0 271.5h.01M129.5 271.5h.01M130.3 269.2h.01M132.7 268.4h.01M134.8 269.6h.01M135.7 271.9h.01M134.9 274.2h.01" stroke="#d4d4d4" class="d"/>
<circle cx="132.0" cy="280.2" r="3.0" class="o"/>
<path d="M132.0 280.2h.01M133.3 281.1h.01" stroke="#d4d4d4" class="d"/>
<circle cx="130.0" cy="293.5" r="10.0" class="o"/>
<path d="M130.0 293.5h.01M132.0 292.0h.01M132.7 294.4h.01M131.3 296.4h.01M128.9 296.7h.01M126.8 295.4h.01M126.1 293.0h.01M126.9 290.7h.01M128.9 289.3h.01M131.3 289.1h.01M133.4 290.2h.01M134.8 292.2h.01M135.0 294.7h.01M134.1 296.9h.01M132.2 298.5h.01M129.9 299.1h.01M127.5 298.7h.01M125.5 297.4h.01M124.2 295.3h.01M123.8 292.9h.01M124.3 290.6h.01" stroke="#d4d4d4" class="d"/>
<circle cx="169.5" cy="304.8" r="9.0" class="o"/>
<path d="M169.5 304.8h.01M170.0 302.3h.01M172.1 303.6h.01M172.4 306.1h.01M170.8 307.9h.01M168.3 308.3h.01M166.3 307.0h.01M165.3 304.7h.01M165.9 302.3h.01M167.6 300.6h.01M170.0 300.0h.01M172.3 300.7h.01M174.0 302.4h.01M174.8 304.7h.01M174.4 307.1h.01M173.1 309.1h.01M171.0 310.3h.01" stroke="#d4d4d4" class="d"/>
<circle cx="175.2" cy="315.2" r="4.5" class="o"/>
<path d="M175.2 315.2h.01M177.7 314.7h.01M177.4 317.1h.01M175.3 318.4h.01" stroke="#d4d4d4" class="d"/>
<circle cx="223.8" cy="310.5" r="11.5" class="o"/>
<path d="M223.8 310.5h.01M221.3 310.1h.01M222.5 307.9h.01M225.0 307.6h.01M226.9 309.1h.01M227.3 311.6h.01M226.1 313.7h.01M223.8 314.7h.01M221.4 314.2h.01M219.7 312.5h.01M219.0 310.2h.01M221.2 306.0h.01M223.5 305.2h.01M225.9 305.5h.01M228.0 306.8h.01M229.3 308.8h.01M229.6 311.2h.01M229.0 313.5h.01M227.5 315.4h.01M225.4 316.6h.01M223.0 317.0h.01M220.7 316.4h.01M218.7 315.0h.01M217.3 313.0h.01M216.7 310.7h.01M216.9 308.3h.01M218.0 306.1h.01M219.6 304.4h.01" stroke="#d4d4d4" class="d"/>
<path d="M219.6 307.8h.01" stroke="#d8d800" class="d"/>
<circle cx="208.8" cy="319.0" r="6.0" class="o"/>
<path d="M208.8 319.0h.01M206.4 318.3h.01M207.9 316.3h.01M210.3 316.3h.01M212.0 318.0h.01M212.1 320.5h.01M210.7 322.4h.01" stroke="#d4d4d4" class="d"/>
<circle cx="223.8" cy="332.2" r="11.0" class="o"/>
<path d="M223.8 332.2h.01M224.6 334.6h.01M222.1 334.6h.01M220.6 332.6h.01M221.0 330.2h.01M222.9 328.7h.01M225.3 328.7h.01M227.3 330.1h.01M228.1 332.4h.01M227.6 334.8h.01M225.9 336.5h.01M223.5 337.2h.01M221.2 336.7h.01M219.3 335.1h.01M218.3 332.9h.01M218.4 330.5h.01M219.5 328.3h.01M221.4 326.8h.01M223.7 326.2h.01M226.1 326.5h.01M228.2 327.7h.01M229.7 329.6h.01M230.4 331.9h.01M230.2 334.3h.01M229.2 336.5h.01M227.5 338.2h.01" stroke="#d4d4d4" class="d"/>
<circle cx="223.2" cy="345.2" r="3.0" class="o"/>
<path d="M223.2 345.2h.01" stroke="#d4d4d4" class="d"/>
<circle cx="221.0" cy="361.0" r="3.0" class="o"/>
<path d="M221.0 361.0h.01" stroke="#d4d4d4" class="d"/>
<circle cx="283.2" cy="289.8" r="8.0" class="o"/>
<path d="M283.2 289.8h.01M284.3 287.5h.01M286.1 289.3h.01M285.7 291.7h.01M283.7 293.2h.01M281.3 292.9h.01M279.6 291.2h.01M279.2 288.7h.01M280.3 286.6h.01M282.3 285.3h.01M284.8 285.2h.01M286.9 286.4h.01M288.2 288.5h.01M288.4 290.9h.01" stroke="#d4d4d4" class="d"/>
<circle cx="283.2" cy="304.0" r="7.0" class="o"/>
<path d="M283.2 304.0h.01M281.1 305.2h.01M280.7 302.8h.01M282.3 301.0h.01M284.8 300.9h.01M286.6 302.5h.01M287.1 305.0h.01M286.0 307.1h.01M283.8 308.3h.01M281.4 308.2h.01" stroke="#d4d4d4" class="d"/>
<circle cx="264.0" cy="313.0" r="11.5" class="o"/>
<path d="M264.0 313.0h.01M261.8 314.3h.01M261.4 311.8h.01M263.1 310.0h.01M265.5 309.9h.01M267.4 311.5h.01M267.8 313.9h.01M266.8 316.1h.01M264.6 317.3h.01M262.2 317.2h.01M259.1 313.7h.01M259.2 311.3h.01M260.4 309.1h.01M262.4 307.8h.01M264.8 307.4h.01M267.1 308.1h.01M268.9 309.7h.01M270.0 311.9h.01M270.1 314.3h.01M269.3 316.6h.01M267.7 318.4h.01M265.5 319.5h.01M263.1 319.7h.01M260.8 319.1h.01M258.8 317.7h.01M257.4 315.8h.01M256.7 313.4h.01M256.9 311.0h.01" stroke="#d4d4d4" class="d"/>
<path d="M260.2 315.9h.01" stroke="#d8d800" class="d"/>
<circle cx="418.6" cy="388.5" r="6.5" class="o"/>
<path d="M418.6 388.5h.01M418.1 391.0h.01M416.0 389.7h.01M415.7 387.2h.01M417.3 385.3h.01M419.7 385.0h.01M421.8 386.2h.01M422.8 388.5h.01" stroke="#d4d4d4" class="d"/>
<path d="M422.3 390.9h.01" stroke="#d8d800" class="d"/>
<circle cx="382.3" cy="423.4" r="14.5" class="o"/>
<path d="M382.3 423.4h.01M382.6 420.9h.01M384.8 422.0h.01M385.3 424.5h.01M383.8 426.5h.01M381.4 427.0h.01M379.3 425.9h.01M378.2 423.7h.01M378.5 421.3h.01M380.0 419.4h.01M382.3 418.6h.01M384.7 419.1h.01M386.6 420.6h.01M387.6 422.8h.01M387.4 425.2h.01M386.3 427.4h.01M384.3 428.8h.01M382.0 429.3h.01M379.6 428.8h.01M377.6 427.5h.01M376.3 425.5h.01M375.8 423.1h.01M379.4 417.1h.01M381.7 416.4h.01M384.1 416.5h.01M386.3 417.4h.01M388.2 418.9h.01M389.4 421.0h.01M389.9 423.3h.01M389.7 425.7h.01M388.7 427.9h.01M385.1 431.0h.01M382.7 431.6h.01M380.3 431.5h.01M378.0 430.6h.01M376.1 429.2h.01M374.6 427.3h.01M373.7 425.1h.01M373.5 422.7h.01M373.9 420.3h.01M375.0 418.1h.01M376.6 416.3h.01M380.9 414.2h.01M383.3 414.1h.01M385.6 414.5h.01" stroke="#d4d4d4" class="d"/>
<path d="M376.2 420.7h.01M377.5 418.6h.01M387.1 429.7h.01M378.6 415.0h.01" stroke="#d8d800" class="d"/>
<text x="141" y="146.7" font-family="Liberation Sans, sans-serif" font-size="6.3" fill="#d8d8a8" textLength="117" lengthAdjust="spacingAndGlyphs">message, fix, change, dupe, screen, log</text>
</svg>
<div style="left:5px;top:408px;width:52px;height:9.5px;background:#808080"></div>
<div style="left:5px;top:408px;width:3.6px;height:9.5px;background:#6060ff"></div>
<div style="left:9px;top:408px;height:9.5px;line-height:9.5px;font-size:6.2px;color:#fff">90 / 1136 (7%)</div>
</div>
<div id="panel">
<div style="left:0;top:0;width:76px;height:421px;background:rgba(128,128,128,0.66)"></div>
<div style="left:0;top:0;width:76px;height:10.5px;background:rgba(170,170,170,0.3)"></div>
<div style="left:0;top:0;width:3px;height:421px;background:rgba(210,210,210,0.16)"></div>
<div style="left:65.2px;top:10.5px;width:7.5px;height:410.5px;background:rgba(200,200,200,0.22)"></div>
<div style="left:65.2px;top:11.5px;width:7.5px;height:11.5px;background:rgba(220,220,220,0.18)"></div>
<div style="left:0;top:417.5px;width:76px;height:3.5px;background:rgba(200,200,200,0.2)"></div>
<div style="left:6.2px;top:0.5px;height:10px;line-height:10px;font-size:8.5px;color:#b4b4b4;transform-origin:0 50%;transform:scaleX(0.935)">7012 Concepts</div>
<div style="left:65.7px;top:2px;width:6.5px;height:7.5px;border:0.6px solid #a0a0a0"><svg width="6" height="7" style="position:absolute;left:0;top:0"><path d="M0.8 1L4.6 5.4M4.6 1L0.8 5.4" stroke="#a0a0a0" stroke-width="0.6"/></svg></div>
<div style="left:66.2px;top:12px;height:10px;line-height:10px;font-size:9.5px;color:#e8e8e8;transform-origin:0 50%;transform:scaleX(0.8)">H</div>
<div class="ci b" style="top:15.20px">numb</div>
<div class="ci b" style="top:24.66px">duplicate</div>
<div class="ci b" style="top:34.12px">group</div>
<div class="ci y" style="top:43.58px">message</div>
<div class="ci b" style="top:53.04px">source</div>
<div class="ci y" style="top:62.50px">number of d...</div>
<div class="ci b" style="top:71.96px">reinsertion...</div>
<div class="ci b" style="top:81.42px">log of mess...</div>
<div class="ci b" style="top:90.88px">Process att...</div>
<div class="ci b" style="top:100.34px">process ID ...</div>
<div class="ci b" style="top:109.80px">Make group ...</div>
<div class="ci b" style="top:119.26px">Sort source</div>
<div class="ci b" style="top:128.72px">file size</div>
<div class="ci b" style="top:138.18px">constraint ...</div>
<div class="ci b" style="top:147.64px">user of nee...</div>
<div class="ci y" style="top:157.10px">Custom form...</div>
<div class="ci b" style="top:166.56px">user want</div>
<div class="ci b" style="top:176.02px">Clear defin...</div>
<div class="ci b" style="top:185.48px">message log</div>
<div class="ci b" style="top:194.94px">uniqueness ...</div>
<div class="ci b" style="top:204.40px">user</div>
<div class="ci b" style="top:213.86px">make</div>
<div class="ci b" style="top:223.32px">need</div>
<div class="ci b" style="top:232.78px">process</div>
<div class="ci b" style="top:242.24px">form</div>
<div class="ci b" style="top:251.70px">want</div>
<div class="ci b" style="top:261.16px">outlook</div>
<div class="ci b" style="top:270.62px">dups</div>
<div class="ci b" style="top:280.08px">attachment</div>
<div class="ci b" style="top:289.54px">log</div>
<div class="ci b" style="top:299.00px">reinsertion</div>
<div class="ci b" style="top:308.46px">uniqueness</div>
<div class="ci b" style="top:317.92px">size</div>
<div class="ci b" style="top:327.38px">file</div>
<div class="ci b" style="top:336.84px">dialog</div>
<div class="ci n" style="top:346.30px">defense exh...</div>
<div class="ci n" style="top:355.76px">life of the...</div>
<div class="ci n" style="top:365.22px">image file</div>
<div class="ci n" style="top:374.68px">trial modul...</div>
<div class="ci n" style="top:384.14px">borderline ...</div>
<div class="ci n" style="top:393.60px">Honeywell A...</div>
<div class="ci n" style="top:403.06px">Bates numbe...</div>
</div>
<div style="left:638.5px;top:33px;width:1.5px;height:423px;background:#d4d0c8"></div>
<div style="left:638px;top:33px;width:0.5px;height:423px;background:#000"></div>

<div id="status">
<div style="left:0;top:0;width:640px;height:0.5px;background:#fff"></div>
<div class="sunk sb" style="left:595px;top:2px;width:13px;height:8px"></div>
<div class="sunk sb" style="left:610px;top:2px;width:13px;height:8px"></div>
<div style="left:611px;top:2px;width:11px;height:8px;line-height:8px;font-size:5px;font-weight:bold;text-align:center;color:#111;letter-spacing:-0.1px">NUM</div>
<div class="sunk sb" style="left:625px;top:2px;width:15px;height:8px"></div>
</div>
</body></html>
